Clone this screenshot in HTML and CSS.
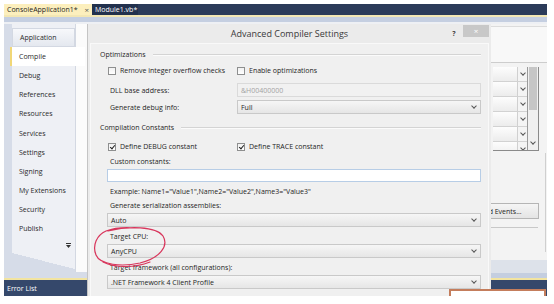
FILE: index.html
```html
<!DOCTYPE html>
<html lang="en">
<head>
  <meta charset="UTF-8" />
  <meta name="viewport" content="width=device-width, initial-scale=1.0"/>
  <title>Advanced Compiler Settings</title>
  <link rel="stylesheet" href="styles.css">
</head>
<body>
  <div class="screen">
    <!-- Document tabs -->
    <div class="doc-tabs">
      <div class="doc-tab doc-tab-active">ConsoleApplication1* <span class="doc-close">×</span></div>
      <div class="doc-tab doc-tab-code">Module1.vb*</div>
    </div>
    <div class="doc-rule"></div>

    <div class="workspace">
      <!-- Project designer tabs -->
      <div class="project-nav">
        <div class="nav-body">
          <div class="nav-tabs">
            <div class="nav-tab nav-tab-first">Application</div>
            <div class="nav-tab nav-tab-current">Compile</div>
            <div class="nav-tab">Debug</div>
            <div class="nav-tab">References</div>
            <div class="nav-tab">Resources</div>
            <div class="nav-tab">Services</div>
            <div class="nav-tab">Settings</div>
            <div class="nav-tab">Signing</div>
            <div class="nav-tab">My Extensions</div>
            <div class="nav-tab">Security</div>
            <div class="nav-tab">Publish</div>
            <div class="nav-more">
              <svg width="5" height="5" viewBox="0 0 5 5"><rect x="0" y="0" width="5" height="1" fill="#333"/><path d="M0 2 H5 L2.5 5 Z" fill="#333"/></svg>
            </div>
            <div class="nav-foot"></div>
          </div>
          <div class="nav-page"></div>
        </div>
        <div class="tool-rule"></div>
        <div class="tool-bar">Error List</div>
      </div>

      <!-- Advanced Compiler Settings dialog -->
      <div class="dialog">
        <div class="dialog-title">
          <span class="dialog-caption">Advanced Compiler Settings</span>
          <span class="dialog-help">?</span>
          <span class="dialog-close">×</span>
        </div>
        <div class="dialog-panel">
          <div class="group-head">Optimizations</div>
          <div class="form-row check-row">
            <label class="check"><span class="box"></span>Remove integer overflow checks</label>
            <label class="check"><span class="box"></span>Enable optimizations</label>
          </div>
          <div class="form-row field-row">
            <span class="field-label">DLL base address:</span>
            <div class="textbox textbox-disabled">&amp;H00400000</div>
          </div>
          <div class="form-row field-row">
            <span class="field-label">Generate debug info:</span>
            <div class="select">Full</div>
          </div>

          <div class="group-head group-head-spaced">Compilation Constants</div>
          <div class="form-row check-row check-row-spaced">
            <label class="check"><span class="box box-checked"></span>Define DEBUG constant</label>
            <label class="check"><span class="box box-checked"></span>Define TRACE constant</label>
          </div>
          <div class="stack-label">Custom constants:</div>
          <div class="wide-field textbox textbox-entry"></div>
          <div class="stack-label">Example: Name1="Value1",Name2="Value2",Name3="Value3"</div>
          <div class="stack-label">Generate serialization assemblies:</div>
          <div class="wide-field select">Auto</div>
          <div class="stack-label">Target CPU:</div>
          <div class="wide-field select">AnyCPU</div>
          <div class="stack-label">Target framework (all configurations):</div>
          <div class="wide-field select">.NET Framework 4 Client Profile</div>
        </div>
      </div>

      <!-- Property page behind the dialog -->
      <div class="page-right">
        <div class="page-top"></div>
        <div class="prop-grid">
          <div class="prop-rows">
            <div class="prop-row"><span class="prop-cell"></span><span class="prop-drop"></span></div>
            <div class="prop-row"><span class="prop-cell"></span><span class="prop-drop"></span></div>
            <div class="prop-row"><span class="prop-cell"></span><span class="prop-drop"></span></div>
            <div class="prop-row"><span class="prop-cell"></span><span class="prop-drop"></span></div>
            <div class="prop-row"><span class="prop-cell"></span><span class="prop-drop"></span></div>
            <div class="prop-row"><span class="prop-cell"></span><span class="prop-drop"></span></div>
          </div>
          <div class="prop-scroll">
            <div class="prop-thumb"></div>
            <span class="prop-down"></span>
          </div>
        </div>
        <div class="page-lower">
          <button class="page-button">Build Events...</button>
          <div class="page-line"></div>
        </div>
        <div class="page-fill"></div>
        <div class="tool-rule"></div>
        <div class="tool-bar"></div>
      </div>
    </div>
  </div>

  <!-- Hand-drawn markup on the screenshot -->
  <svg class="scribble" width="554" height="304" viewBox="0 0 554 304">
    <path d="M108 231 C128 226, 156 226, 163 236 C169 246, 160 258, 140 263 C122 267, 100 265, 96 255 C92 245, 97 235, 106 231 C114 228, 124 227, 135 228" />
    <path d="M103 262 C115 268, 135 268, 150 262" />
  </svg>
  <div class="callout"></div>
</body>
</html>
```

FILE: styles.css
```css
* {
  box-sizing: border-box;
}

body {
  margin: 0;
  width: 554px;
  height: 304px;
  position: relative;
  overflow: hidden;
  background-color: #fff;
  font-family: "Open Sans", "Noto Sans", sans-serif;
  font-size: 7px;
  line-height: 1;
  color: #1e1e1e;
}

.screen {
  margin: 4px 0 0 4px;
  width: 543px;
  height: 292px;
  overflow: hidden;
  display: flex;
  flex-direction: column;
  background-color: #f4f5f8;
}

/* Document tabs */
.doc-tabs {
  height: 11px;
  display: flex;
  background-color: #2b3b59;
}
.doc-tab {
  display: flex;
  align-items: center;
  padding: 0 3px;
  white-space: nowrap;
}
.doc-tab-active {
  width: 88px;
  background-color: #fcefbd;
}
.doc-close {
  margin-left: auto;
  font-size: 8px;
  color: #555;
}
.doc-tab-code {
  width: 46px;
  color: #fff;
  background-color: #22314d;
}
.doc-rule {
  height: 9px;
  border-top: 2px solid #f3e7b4;
  border-bottom: 2px solid #eef0f4;
  background-color: #c5cfe1;
}

.workspace {
  flex: 1;
  display: flex;
}

/* Project designer side tabs */
.project-nav {
  width: 83px;
  display: flex;
  flex-direction: column;
  background-color: #d6dce8;
}
.nav-body {
  flex: 1;
  display: flex;
}
.nav-tabs {
  width: 63px;
  margin-left: 8px;
  padding-top: 3.5px;
  align-self: flex-start;
  display: flex;
  flex-direction: column;
  background-color: #eef0f5;
}
.nav-tab {
  height: 19.2px;
  display: flex;
  align-items: center;
  padding-left: 7px;
  white-space: nowrap;
  color: #2a2a2a;
}
.nav-tab-first {
  border: 1px solid #d3d8e2;
  background: linear-gradient(#f7f8fb, #e4e8ef);
}
.nav-tab-current {
  position: relative;
  margin: 0 -10px 0 -2px;
  border-left: 2px solid #f1d777;
  background-color: #fff;
}
.nav-more {
  height: 14px;
  display: flex;
  align-items: center;
  justify-content: flex-end;
  padding-right: 4px;
}
.nav-foot {
  height: 16px;
  background: linear-gradient(to bottom left, #eef0f5 50%, #d6dce8 50%);
}
.nav-page {
  flex: 1;
  margin-bottom: 6px;
  border-left: 1px solid #d3d8e2;
  background-color: #fbfbfb;
}

.tool-rule {
  height: 2px;
  background-color: #f2e4a0;
}
.tool-bar {
  height: 16px;
  padding: 5px 0 0 3px;
  background-color: #35486b;
  color: #fff;
}

/* Dialog */
.dialog {
  position: relative;
  z-index: 1;
  width: 404px;
  display: flex;
  flex-direction: column;
  border-left: 1px solid #c4c4c4;
  background-color: #ebebeb;
}
.dialog-title {
  height: 19px;
  display: flex;
  align-items: center;
  padding-left: 42px;
}
.dialog-caption {
  flex: 1;
  text-align: center;
  font-size: 9px;
  color: #3a3a3a;
}
.dialog-help {
  width: 10px;
  text-align: center;
  font-weight: bold;
  color: #444;
}
.dialog-close {
  width: 26px;
  height: 12px;
  margin: 1px 2px 0 4px;
  align-self: flex-start;
  display: flex;
  align-items: center;
  justify-content: center;
  font-size: 8px;
  color: #fff;
  background-color: #c8c8c8;
}
.dialog-panel {
  flex: 1;
  margin: 0 2px;
  border: 1px solid #f9f9f9;
  border-bottom: none;
  background-color: #f0f0f0;
}

.group-head {
  height: 11px;
  margin-top: 5px;
  display: flex;
  align-items: center;
  padding: 0 7px 0 9px;
  white-space: nowrap;
}
.group-head::after {
  content: "";
  flex: 1;
  margin-left: 7px;
  border-top: 1px solid #d4d4d4;
  border-bottom: 1px solid #fbfbfb;
}
.group-head-spaced {
  margin-top: 8px;
}

.form-row {
  display: grid;
  grid-template-columns: 129px 1fr;
  align-items: center;
  padding: 0 7px 0 17px;
}
.check-row {
  height: 11px;
  margin-top: 5px;
}
.check-row-spaced {
  margin-top: 8px;
}
.check {
  display: flex;
  align-items: center;
  gap: 4px;
  white-space: nowrap;
}
.box {
  width: 8px;
  height: 8px;
  display: flex;
  align-items: center;
  justify-content: center;
  border: 1px solid #8e8f8f;
  background: linear-gradient(#f1f1f1, #fff);
}
.box-checked::after {
  content: "";
  width: 2px;
  height: 4px;
  margin-top: -1px;
  border-right: 1.5px solid #222;
  border-bottom: 1.5px solid #222;
  transform: rotate(40deg);
}
.field-row {
  height: 14px;
  margin-top: 7px;
}
.field-row + .field-row {
  margin-top: 3px;
}
.field-label {
  padding-left: 2px;
}

.textbox,
.select {
  height: 14px;
  display: flex;
  align-items: center;
  padding: 0 4px 0 3px;
  white-space: nowrap;
}
.textbox-disabled {
  border: 1px solid #dadada;
  background-color: #f1f1f1;
  color: #a3a3a3;
}
.textbox-entry {
  height: 13px;
  border: 1px solid #b7cde6;
  background-color: #fff;
}
.select {
  border: 1px solid #c9c9c9;
  background: linear-gradient(#f6f6f6, #e6e6e6);
}
.select::after {
  content: "";
  width: 3px;
  height: 3px;
  margin: 0 0 2px auto;
  border-right: 1px solid #555;
  border-bottom: 1px solid #555;
  transform: rotate(45deg);
}

.stack-label {
  height: 11px;
  margin-top: 4px;
  display: flex;
  align-items: center;
  padding-left: 19px;
  white-space: nowrap;
}
.stack-label + .stack-label {
  margin-top: 3px;
}
.wide-field {
  margin: 2px 7px 0 16px;
}

/* Property page that shows past the dialog */
.page-right {
  flex: 1;
  display: flex;
  flex-direction: column;
  background-color: #f3f3f3;
}
.page-top {
  height: 37px;
  margin-top: 2px;
  border-top: 1px solid #dcdcdc;
  border-bottom: 1px solid #cdcdcd;
  background-color: #f8f8f8;
}
.prop-grid {
  width: 46px;
  height: 84px;
  margin: 4px 0 0 2px;
  display: flex;
  overflow: hidden;
  border-right: 1px solid #8a8a8a;
  border-bottom: 1px solid #8a8a8a;
}
.prop-rows {
  flex: 1;
}
.prop-row {
  height: 15px;
  display: flex;
  border-bottom: 1px solid #d2d2d2;
}
.prop-cell {
  flex: 1;
  background: linear-gradient(#fdfdfd, #ececec);
}
.prop-drop,
.prop-down {
  width: 10px;
  display: flex;
  align-items: center;
  justify-content: center;
}
.prop-drop {
  border-left: 1px solid #d0d0d0;
  background-color: #f4f4f4;
}
.prop-drop::before,
.prop-down::before {
  content: "";
  width: 3px;
  height: 3px;
  margin-bottom: 2px;
  border-right: 1px solid #555;
  border-bottom: 1px solid #555;
  transform: rotate(45deg);
}
.prop-scroll {
  width: 11px;
  display: flex;
  flex-direction: column;
  border-left: 1px solid #9a9a9a;
  background-color: #f0f0f0;
}
.prop-thumb {
  height: 43px;
  margin: 0 1px;
  background-color: #c6c6c6;
}
.prop-down {
  height: 8px;
  margin-top: auto;
  margin-bottom: 3px;
}
.page-lower {
  height: 99px;
  margin: 2px 1px 0 0;
  border-right: 1px solid #cfcfcf;
}
.page-button {
  display: block;
  width: 80px;
  height: 16px;
  margin: 50px 0 0 -32px;
  padding: 0;
  border: 1px solid #b5b5b5;
  background: linear-gradient(#f5f5f5, #e4e4e4);
  font: inherit;
  color: #1e1e1e;
}
.page-line {
  margin: 8px 7px 0 -1px;
  border-top: 1px solid #c8c8c8;
}
.page-fill {
  flex: 1;
  background: linear-gradient(#f3f3f3 0 8px, #dde2ea 8px calc(100% - 5px), #c4cee0 calc(100% - 5px));
}

/* Markup drawn over the screenshot */
.scribble {
  position: absolute;
  left: 0;
  top: 0;
  z-index: 2;
  pointer-events: none;
}
.scribble path {
  fill: none;
  stroke: #d8365c;
  stroke-width: 1.2;
  stroke-linecap: round;
}
.callout {
  position: absolute;
  left: 449px;
  top: 289px;
  z-index: 2;
  width: 97px;
  height: 7px;
  border: 2px solid #c47d5c;
  border-bottom: none;
  background-color: #fff;
}
```
